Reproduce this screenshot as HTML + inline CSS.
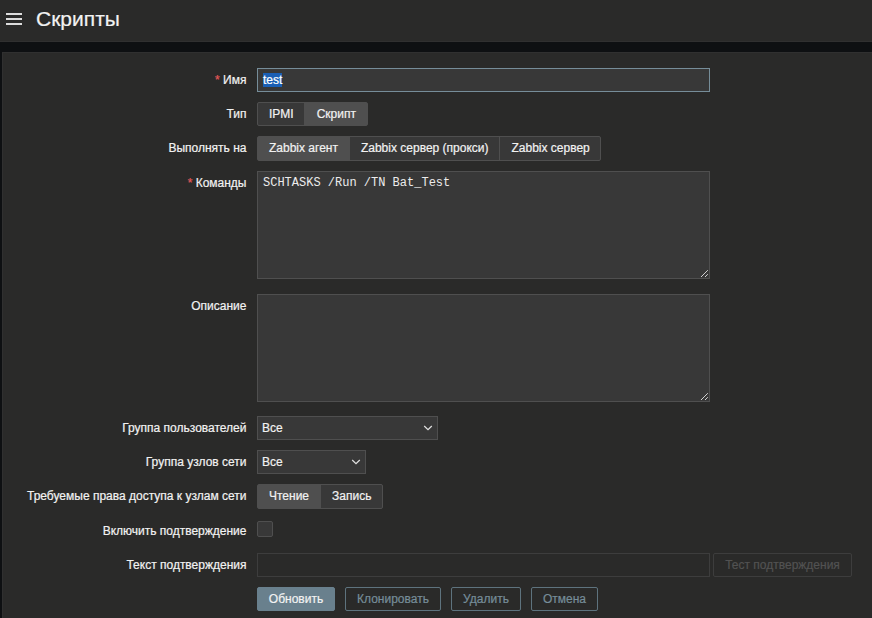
<!DOCTYPE html>
<html lang="ru">
<head>
<meta charset="utf-8">
<title>Скрипты</title>
<style>
*{box-sizing:border-box;margin:0;padding:0}
html,body{width:872px;height:618px;overflow:hidden}
body{background:#0e1012;color:#f2f2f2;font-family:"Liberation Sans",Arial,sans-serif;font-size:12px;line-height:14px;position:relative;-webkit-text-stroke:0.2px currentColor}
.hdr{position:absolute;left:0;top:0;width:872px;height:42px;background:#2a2a29;border-bottom:1px solid #303030}
.burger{position:absolute;left:6px;top:13px;width:16px;height:13px}
.burger i{position:absolute;left:0;width:16px;height:2px;background:#dcdcdc}
.title{position:absolute;left:36px;top:6px;font-size:21px;line-height:26px;color:#f2f2f2;white-space:nowrap}
.panel{position:absolute;left:2px;top:52px;width:880px;height:580px;background:#2a2a29;border:1px solid #303030}
.lbl{position:absolute;right:625.5px;white-space:nowrap;text-align:right;height:14px;line-height:14px}
.lbl b{font-weight:normal;color:#e45959}
.inp{position:absolute;background:#383838;border:1px solid #4f4f4f;height:24px}
.seg{position:absolute;height:24px;display:flex;border:1px solid #4f4f4f;border-radius:2px;background:#383838}
.seg span{display:block;height:100%;line-height:22px;padding:0 11px;white-space:nowrap;border-left:1px solid #4f4f4f}
.seg span:first-child{border-left:0}
.seg span.on{background:#4f4f4f}
.btn{position:absolute;height:24px;line-height:22px;border:1px solid #5e737e;border-radius:2px;text-align:center;white-space:nowrap;color:#768d99}
.btn.p{background:#69808d;border-color:#69808d;color:#f2f2f2}
.sel{position:absolute;height:24px;background:#383838;border:1px solid #4f4f4f;line-height:22px;padding-left:4px}
.sel svg{position:absolute;right:4px;top:5.5px}
.rh{position:absolute;right:0;bottom:0}
.mono{font-family:"Liberation Mono","Courier New",monospace;font-size:12px;-webkit-text-stroke:0;color:#ececec}
</style>
</head>
<body>
<div class="hdr">
  <div class="burger"><i style="top:0"></i><i style="top:5px"></i><i style="top:10px"></i></div>
  <div class="title">Скрипты</div>
</div>
<div class="panel"></div>

<div class="lbl" style="top:73px"><b>*</b> Имя</div>
<div class="inp" style="left:257px;top:68px;width:453px;border-color:#768d99;line-height:22px;padding-left:5px"><span style="background:#1a5fb4;color:#fff">test</span></div>

<div class="lbl" style="top:107px">Тип</div>
<div class="seg" style="left:257px;top:102px"><span style="padding-right:10px">IPMI</span><span class="on" style="padding-left:12px">Скрипт</span></div>

<div class="lbl" style="top:141px">Выполнять на</div>
<div class="seg" style="left:257px;top:136px;height:25px"><span class="on">Zabbix агент</span><span>Zabbix сервер (прокси)</span><span style="padding-right:10px">Zabbix сервер</span></div>

<div class="lbl" style="top:176px"><b>*</b> Команды</div>
<div class="inp mono" style="left:257px;top:171px;width:453px;height:108px;padding:4px 5px;line-height:14px">SCHTASKS /Run /TN Bat_Test<svg class="rh" width="10" height="10" viewBox="0 0 10 10"><path d="M2 9 L8.8 2.2 M6 9 L8.8 6.2" fill="none" stroke="#d2d2d2" stroke-width="1"/></svg></div>

<div class="lbl" style="top:299px">Описание</div>
<div class="inp" style="left:257px;top:294px;width:453px;height:108px"><svg class="rh" width="10" height="10" viewBox="0 0 10 10"><path d="M2 9 L8.8 2.2 M6 9 L8.8 6.2" fill="none" stroke="#d2d2d2" stroke-width="1"/></svg></div>

<div class="lbl" style="top:421px">Группа пользователей</div>
<div class="sel" style="left:257px;top:416px;width:181px">Все<svg width="10" height="10" viewBox="0 0 10 10"><path d="M1.2 3 L5 6.7 L8.8 3" fill="none" stroke="#e0e0e0" stroke-width="1.25"/></svg></div>

<div class="lbl" style="top:455px">Группа узлов сети</div>
<div class="sel" style="left:257px;top:450px;width:109px">Все<svg width="10" height="10" viewBox="0 0 10 10"><path d="M1.2 3 L5 6.7 L8.8 3" fill="none" stroke="#e0e0e0" stroke-width="1.25"/></svg></div>

<div class="lbl" style="top:489px">Требуемые права доступа к узлам сети</div>
<div class="seg" style="left:257px;top:484px;height:25px"><span class="on">Чтение</span><span>Запись</span></div>

<div class="lbl" style="top:524px">Включить подтверждение</div>
<div class="inp" style="left:257px;top:521px;width:16px;height:16px;border-radius:2px"></div>

<div class="lbl" style="top:558px">Текст подтверждения</div>
<div class="inp" style="left:257px;top:553px;width:453px;background:#2a2a29;border-color:#3d3d3d"></div>
<div class="btn" style="left:713px;top:553px;width:139px;border-color:#3d3d3d;color:#525252">Тест подтверждения</div>

<div class="btn p" style="left:257px;top:587px;width:78px">Обновить</div>
<div class="btn" style="left:345px;top:587px;width:96px">Клонировать</div>
<div class="btn" style="left:451px;top:587px;width:70px">Удалить</div>
<div class="btn" style="left:531px;top:587px;width:67px">Отмена</div>
</body>
</html>
